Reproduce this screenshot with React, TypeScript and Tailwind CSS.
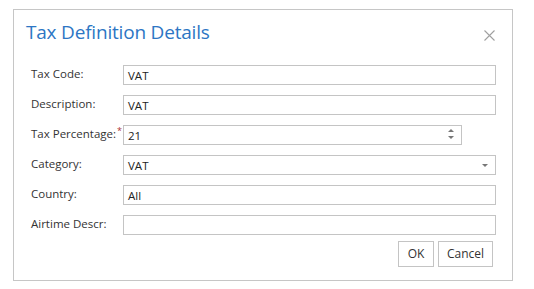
const fields = [
  { label: "Tax Code:", value: "VAT", kind: "text" },
  { label: "Description:", value: "VAT", kind: "text" },
  { label: "Tax Percentage:", value: "21", kind: "number", required: true },
  { label: "Category:", value: "VAT", kind: "select" },
  { label: "Country:", value: "All", kind: "text" },
  { label: "Airtime Descr:", value: "", kind: "text" },
];

export default function App() {
  return (
    <div
      className="w-[534px] h-[289px] bg-white pl-[13px] pt-[9px]"
      style={{ fontFamily: '"Open Sans", "Segoe UI", sans-serif' }}
    >
      <div className="w-[500px] h-[272px] border border-[#c6c6c6] bg-white flex flex-col">
        {/* Header */}
        <div className="flex items-start justify-between pl-[12px] pr-[12px] pt-[8px] h-[55px]">
          <h2 className="text-[19px] leading-[28px] text-[#2d76c4] tracking-[-0.2px]">
            Tax Definition Details
          </h2>
          <svg className="mt-[12px] mr-[5px]" width="11" height="11" viewBox="0 0 11 11">
            <path d="M0.5 0.5L10.5 10.5M10.5 0.5L0.5 10.5" stroke="#a0a0a0" strokeWidth="1.1" fill="none" />
          </svg>
        </div>

        {/* Form */}
        <div className="flex flex-col gap-[10px] pl-[17px]">
          {fields.map((f) => (
            <div key={f.label} className="flex items-start">
              <div className="w-[92px] text-[11.5px] leading-[16px] text-[#333] pt-[1px] whitespace-nowrap">
                {f.label}
                {f.required && <sup className="text-[#a33] text-[9px] ml-[1px]">*</sup>}
              </div>
              <div
                className={`relative h-[20px] border border-[#c4c4c4] bg-white flex items-center pl-[4px] text-[11.5px] text-[#222] ${
                  f.kind === "number" ? "w-[339px]" : "w-[373px]"
                }`}
              >
                <span className="pt-[2px]">{f.value}</span>
                {f.kind === "number" && (
                  <div className="absolute right-[7px] top-[3px] flex flex-col gap-[4px]">
                    <svg width="6" height="3" viewBox="0 0 6 3">
                      <path d="M0 3L3 0L6 3Z" fill="#777" />
                    </svg>
                    <svg width="6" height="3" viewBox="0 0 6 3">
                      <path d="M0 0L3 3L6 0Z" fill="#777" />
                    </svg>
                  </div>
                )}
                {f.kind === "select" && (
                  <svg className="absolute right-[7px] top-[8px]" width="6" height="3" viewBox="0 0 6 3">
                    <path d="M0 0L3 3L6 0Z" fill="#777" />
                  </svg>
                )}
              </div>
            </div>
          ))}
        </div>

        {/* Footer */}
        <div className="flex justify-end gap-[4px] pr-[19px] mt-[6px]">
          <button className="w-[36px] h-[26px] border border-[#c4c4c4] bg-white text-[12px] text-[#333]">
            OK
          </button>
          <button className="w-[55px] h-[26px] border border-[#c4c4c4] bg-white text-[12px] text-[#333]">
            Cancel
          </button>
        </div>
      </div>
    </div>
  );
}
